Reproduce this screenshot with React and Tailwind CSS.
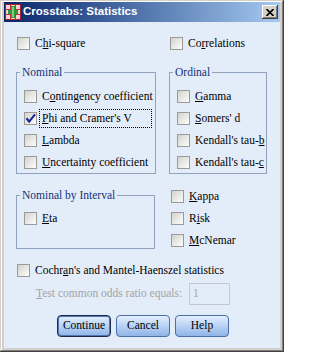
import clsx from 'clsx'

function Key({ text }) {
  const i = text.indexOf('&')
  if (i < 0) return text
  return (
    <>
      {text.slice(0, i)}
      <span className="underline">{text[i + 1]}</span>
      {text.slice(i + 2)}
    </>
  )
}

function Check({ checked }) {
  return (
    <span className="relative flex h-[13px] w-[13px] shrink-0 border border-[#9a9a9a] bg-linear-to-br from-[#d3d3cd] to-[#fdfdfc]">
      {checked && (
        <svg viewBox="0 0 13 13" className="absolute -left-px -top-px h-[13px] w-[13px]" aria-hidden>
          <path d="M2.5 6.2 L5.2 9.6 L11 2.4" fill="none" stroke="#1d2496" strokeWidth="2.2" />
        </svg>
      )}
    </span>
  )
}

function Option({ label, checked, focus, className }) {
  return (
    <div className={clsx('flex h-[13px] items-center', className)}>
      <Check checked={checked} />
      {focus ? (
        <span className="-my-[3px] ml-[2px] flex h-[19px] w-[113px] items-center whitespace-nowrap border border-dotted border-black pl-[2px] leading-none">
          <Key text={label} />
        </span>
      ) : (
        <span className="ml-[5px] whitespace-nowrap leading-none">
          <Key text={label} />
        </span>
      )}
    </div>
  )
}

function Group({ title, className, children }) {
  return (
    <div className={clsx('relative border border-[#8fa3bf]', className)}>
      <span className="absolute -top-[8px] left-[3px] whitespace-nowrap bg-[#e3edf9] px-[2px] leading-[14px] text-[#14307a]">
        {title}
      </span>
      {children}
    </div>
  )
}

function Button({ children, primary }) {
  return (
    <button
      type="button"
      className={clsx(
        'flex h-[22px] w-[54px] items-center justify-center rounded-[4px] border bg-linear-to-b from-[#e4eefc] via-[#b9d2f4] to-[#8fb4e6] font-[Liberation_Serif,serif] leading-none text-black',
        primary
          ? 'border-[#1d2c4e] shadow-[inset_0_0_0_1px_#5477ad]'
          : 'border-[#4a6ea6]',
      )}
    >
      {children}
    </button>
  )
}

function AppIcon() {
  return (
    <svg viewBox="0 0 16 16" className="h-4 w-4" aria-hidden>
      <rect x="0" y="0" width="16" height="16" fill="#a8202a" />
      <rect x="1" y="1" width="14" height="14" fill="#f3d2d6" />
      <path d="M1 5.5H15M1 10.5H15M5.5 1V15M10.5 1V15" stroke="#c2303c" strokeWidth="1" />
      <rect x="6" y="2" width="4" height="12" fill="#2f9a3a" />
      <rect x="3" y="6" width="10" height="4" fill="#2f9a3a" />
      <rect x="7" y="3" width="2" height="10" fill="#7ed07a" />
    </svg>
  )
}

export default function App() {
  return (
    <div className="flex h-[352px] w-[284px] flex-col bg-[#d4d0c8] px-[4px] pb-[4px] pt-[2px] font-[Liberation_Serif,serif] text-[11.5px] text-black shadow-[inset_-1px_-1px_0_#404040,inset_1px_1px_0_#d4d0c8,inset_-2px_-2px_0_#808080,inset_2px_2px_0_#ffffff]">
      <div className="flex h-[20px] shrink-0 items-center bg-linear-to-r from-[#0a246a] to-[#a6caf0] pl-[1px] pr-[2px]">
        <AppIcon />
        <span className="ml-[2px] font-[Liberation_Sans,sans-serif] text-[11.5px] font-bold leading-none text-white">
          Crosstabs: Statistics
        </span>
        <button
          type="button"
          className="ml-auto flex h-[14px] w-[16px] items-center justify-center bg-[#d4d0c8] shadow-[inset_-1px_-1px_0_#404040,inset_1px_1px_0_#ffffff,inset_-2px_-2px_0_#808080]"
          aria-label="Close"
        >
          <svg viewBox="0 0 8 7" className="h-[7px] w-[8px]" aria-hidden>
            <path d="M0.5 0 L7.5 7 M7.5 0 L0.5 7" stroke="#000" strokeWidth="1.6" />
          </svg>
        </button>
      </div>

      <div className="flex-1 bg-[#e3edf9] px-[12px]">
        <div className="mt-[15px] grid grid-cols-[140px_98px] gap-x-[13px]">
          <Option label="C&hi-square" className="ml-px" />
          <Option label="Co&rrelations" className="ml-px" />
        </div>

        <div className="mt-[22px] grid grid-cols-[140px_98px] gap-x-[13px]">
          <Group title="Nominal" className="h-[102px]">
            <div className="flex flex-col gap-[9px] pl-[7px] pt-[17px]">
              <Option label="C&ontingency coefficient" />
              <Option label="&Phi and Cramer's V" checked focus />
              <Option label="&Lambda" />
              <Option label="&Uncertainty coefficient" />
            </div>
          </Group>
          <Group title="Ordinal" className="h-[102px]">
            <div className="flex flex-col gap-[9px] pl-[7px] pt-[17px]">
              <Option label="&Gamma" />
              <Option label="&Somers' d" />
              <Option label="Kendall's tau-&b" />
              <Option label="Kendall's tau-&c" />
            </div>
          </Group>
        </div>

        <div className="mt-[16px] grid grid-cols-[139px_98px] gap-x-[14px]">
          <Group title="Nominal by Interval" className="mt-[5px] h-[54px]">
            <div className="pl-[7px] pt-[16px]">
              <Option label="&Eta" />
            </div>
          </Group>
          <div className="ml-[2px] flex flex-col gap-[9px]">
            <Option label="&Kappa" />
            <Option label="R&isk" />
            <Option label="&McNemar" />
          </div>
        </div>

        <Option label="Cochr&an's and Mantel-Haenszel statistics" className="ml-px mt-[15px]" />

        <div className="mt-[6px] flex items-center">
          <span className="ml-[20px] w-[153px] whitespace-nowrap leading-none text-[#a3a3a3]">
            <Key text="&Test common odds ratio equals:" />
          </span>
          <div className="flex h-[22px] w-[41px] items-center border border-[#c3c8d0] pl-[3px] leading-none text-[#a3a3a3]">
            1
          </div>
        </div>

        <div className="ml-[41px] mt-[10px] flex gap-[5px]">
          <Button primary>Continue</Button>
          <Button>Cancel</Button>
          <Button>Help</Button>
        </div>
      </div>
    </div>
  )
}
